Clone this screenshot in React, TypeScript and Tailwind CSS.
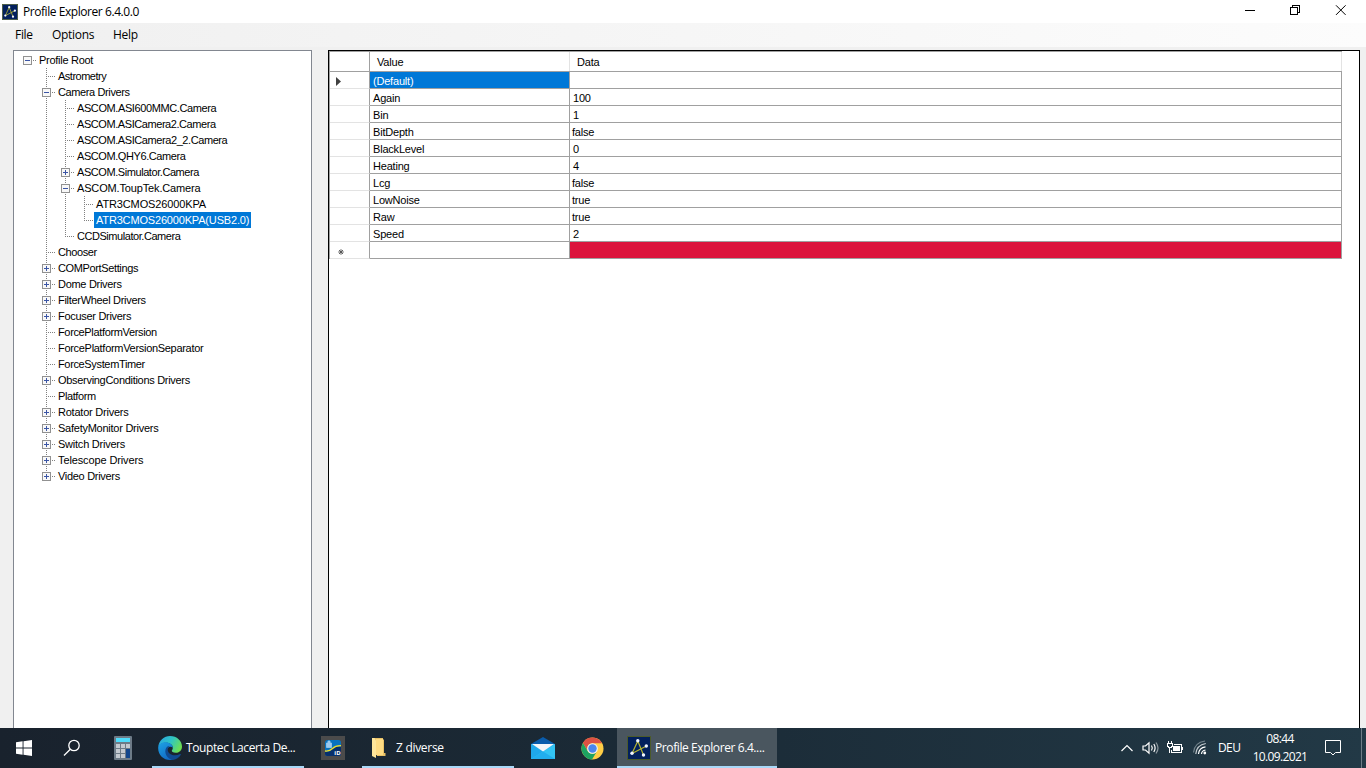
import clsx from "clsx";
import type { ReactNode } from "react";

type TreeRow = {
  label: string;
  // one character per indent column: "|" line passes, " " empty,
  // "T" branch, "L" last branch, "+" / "-" expander, "r" root expander, "e" last expander
  guides: string;
  track?: string;
  selected?: boolean;
};

const TREE: TreeRow[] = [
  { label: "Profile Root", guides: "r", track: "tracking-[-0.28px]" },
  { label: "Astrometry", guides: " T", track: "tracking-[-0.5px]" },
  { label: "Camera Drivers", guides: " -", track: "tracking-[-0.38px]" },
  { label: "ASCOM.ASI600MMC.Camera", guides: " |T", track: "tracking-[-0.4px]" },
  { label: "ASCOM.ASICamera2.Camera", guides: " |T", track: "tracking-[-0.43px]" },
  { label: "ASCOM.ASICamera2_2.Camera", guides: " |T", track: "tracking-[-0.42px]" },
  { label: "ASCOM.QHY6.Camera", guides: " |T", track: "tracking-[-0.42px]" },
  { label: "ASCOM.Simulator.Camera", guides: " |+", track: "tracking-[-0.43px]" },
  { label: "ASCOM.ToupTek.Camera", guides: " |-", track: "tracking-[-0.15px]" },
  { label: "ATR3CMOS26000KPA", guides: " ||T", track: "tracking-[-0.13px]" },
  { label: "ATR3CMOS26000KPA(USB2.0)", guides: " ||L", track: "tracking-[-0.17px]", selected: true },
  { label: "CCDSimulator.Camera", guides: " |L", track: "tracking-[-0.45px]" },
  { label: "Chooser", guides: " T", track: "tracking-[-0.4px]" },
  { label: "COMPortSettings", guides: " +", track: "tracking-[-0.37px]" },
  { label: "Dome Drivers", guides: " +" },
  { label: "FilterWheel Drivers", guides: " +" },
  { label: "Focuser Drivers", guides: " +" },
  { label: "ForcePlatformVersion", guides: " T", track: "tracking-[-0.35px]" },
  { label: "ForcePlatformVersionSeparator", guides: " T" },
  { label: "ForceSystemTimer", guides: " T", track: "tracking-[-0.35px]" },
  { label: "ObservingConditions Drivers", guides: " +" },
  { label: "Platform", guides: " T", track: "tracking-[-0.4px]" },
  { label: "Rotator Drivers", guides: " +", track: "tracking-[-0.23px]" },
  { label: "SafetyMonitor Drivers", guides: " +", track: "tracking-[-0.25px]" },
  { label: "Switch Drivers", guides: " +", track: "tracking-[-0.23px]" },
  { label: "Telescope Drivers", guides: " +", track: "tracking-[-0.12px]" },
  { label: "Video Drivers", guides: " e" },
];

const VALUES = [
  ["(Default)", ""],
  ["Again", "100"],
  ["Bin", "1"],
  ["BitDepth", "false"],
  ["BlackLevel", "0"],
  ["Heating", "4"],
  ["Lcg", "false"],
  ["LowNoise", "true"],
  ["Raw", "true"],
  ["Speed", "2"],
];

function Guide({ kind }: { kind: string }) {
  const box = "r+-e".includes(kind);
  const top = kind !== " " && kind !== "r";
  const bottom = "|T+-".includes(kind);
  return (
    <svg width="19" height="16" className="shrink-0" shapeRendering="crispEdges">
      <g stroke="#808080" strokeDasharray="1 1">
        {top && <path d="M9.5 0V8" />}
        {bottom && <path d="M9.5 8V16" />}
        {(kind === "T" || kind === "L") && <path d="M9 8.5H18" />}
        {box && <path d="M15 8.5H18" />}
      </g>
      {box && (
        <>
          <rect x="5.5" y="4.5" width="8" height="8" fill="#f8f8f8" stroke="#919191" />
          <path d="M7 8.5h5" stroke="#3b55a5" />
          {(kind === "+" || kind === "e") && <path d="M9.5 6v5" stroke="#3b55a5" />}
        </>
      )}
    </svg>
  );
}

function AscomIcon({ className }: { className: string }) {
  return (
    <svg viewBox="0 0 24 24" className={className}>
      <rect x="0.5" y="0.5" width="23" height="23" fill="#02205c" stroke="#4b5a2a" />
      <path d="M5 17.500 10.800 5 16.500 19M5 17.500 19.500 10" fill="none" stroke="#b4b432" strokeWidth="1.200" />
      <g fill="#f0f4ff">
        <circle cx="10.800" cy="4.800" r="1.700" />
        <circle cx="19.300" cy="10" r="1.700" />
        <circle cx="5" cy="17.300" r="1.700" />
        <circle cx="16.500" cy="19" r="1.700" />
      </g>
    </svg>
  );
}

function TitleBar() {
  return (
    <header className="flex h-[23px] shrink-0 items-center bg-white pl-[2px]">
      <AscomIcon className="h-4 w-4" />
      <span className="ml-[5px] flex-1 text-[12px] tracking-[-0.44px]">Profile Explorer 6.4.0.0</span>
      <svg width="126" height="23" fill="none" stroke="#000" className="shrink-0">
        <path d="M5 10.5h10M50.5 7.5h7v7h-7zM52.5 7.5v-2h7v7h-2" shapeRendering="crispEdges" />
        <path d="m96 5.3 9.6 9.6M105.6 5.3 96 14.9" />
      </svg>
    </header>
  );
}

function Tree() {
  return (
    <aside className="w-[299px] shrink-0 border border-b-0 border-[#828790] bg-white pl-1 pt-px">
      {TREE.map((row) => (
        <div key={row.label} className="flex h-4">
          {row.guides.split("").map((kind, i) => (
            <Guide key={i} kind={kind} />
          ))}
          <span
            className={clsx(
              "h-4 whitespace-nowrap text-[11px] leading-4",
              row.track ?? "tracking-[-0.3px]",
              row.selected ? "bg-[#0078d7] px-[2px] text-white" : "pl-[2px]",
            )}
          >
            {row.label}
          </span>
        </div>
      ))}
    </aside>
  );
}

function GridRow({ marker, children }: { marker?: ReactNode; children: ReactNode }) {
  return (
    <div className="flex h-[17px]">
      <div className="flex w-10 items-center border-b border-r border-b-[#e3e3e3] border-r-[#a0a0a0]">{marker}</div>
      {children}
    </div>
  );
}

const CELL = "h-[17px] overflow-hidden border-b border-r border-[#a0a0a0]";

function DataGrid() {
  return (
    <main className="mr-[6px] flex-1 border border-b-0 border-black bg-white text-[11px] tracking-[-0.2px]">
      <div className="w-[1013px] border-l border-t border-[#a0a0a0]">
        <div className="flex h-5 border-b border-[#a0a0a0] leading-5">
          <div className="w-10 border-r border-[#a0a0a0]" />
          <div className="w-[200px] border-r border-[#e3e3e3] pl-[7px]">Value</div>
          <div className="w-[772px] border-r border-[#e3e3e3] pl-[7px]">Data</div>
        </div>
        {VALUES.map(([name, data], i) => (
          <GridRow
            key={name}
            marker={
              i === 0 && (
                <svg width="12" height="11" className="ml-[5px] mt-[2px]">
                  <path d="M1 1v9l5-4.5z" fill="#404040" />
                </svg>
              )
            }
          >
            <div
              className={clsx(
                CELL,
                "w-[200px] pl-[3px]",
                i === 0 ? "bg-[#0078d7] leading-[18px] text-white" : "leading-[19px]",
              )}
            >
              {name}
            </div>
            <div className={clsx(CELL, "w-[772px] leading-[19px]", /\d/.test(data) ? "pl-[3px]" : "pl-[2px]")}>
              {data}
            </div>
          </GridRow>
        ))}
        <GridRow
          marker={
            <svg width="8" height="8" className="ml-[7px] mt-[3px]">
              <path d="M4 1.200v5.600M1.200 4h5.600M2 2l4 4M6 2 2 6" stroke="#505050" strokeWidth="0.900" />
            </svg>
          }
        >
          <div className={clsx(CELL, "w-[200px]")} />
          <div className={clsx(CELL, "w-[772px] bg-[#dc143c]")} />
        </GridRow>
      </div>
    </main>
  );
}

function EdgeIcon() {
  return (
    <svg viewBox="0 0 24 24" width="24" height="24">
      <defs>
        <linearGradient id="edgeTop" x1="0" y1="0.2" x2="1" y2="0.6">
          <stop offset="0" stopColor="#2aa5e0" />
          <stop offset="0.5" stopColor="#2fc5c4" />
          <stop offset="1" stopColor="#6fe04e" />
        </linearGradient>
        <linearGradient id="edgeLeft" x1="0" y1="0" x2="0.6" y2="1">
          <stop offset="0" stopColor="#1da2e4" />
          <stop offset="1" stopColor="#1168c4" />
        </linearGradient>
      </defs>
      <path d="M.3 10.500C1.200 4.500 6 0 12 0c7 0 12 5 12 10.500 0 4-3 6.300-6.200 6.300-3 0-4-1.200-4-2 0-.7 1-1.100 1-3 0-2.600-2.600-5-6.600-5C4 6.800 1 8.800.3 10.500z" fill="url(#edgeTop)" />
      <path d="M.3 10.500C1 8 4 6.300 7.500 6.300c4 0 7.300 2.400 7.300 5.500-2-2-6-1-6 3.200 0 4.300 4 8.200 8.700 7.300-1.500 1-3.300 1.700-5.500 1.700C5 24-.7 18 .3 10.500z" fill="url(#edgeLeft)" />
      <path d="M9.500 10.500c-4 3-2.500 11.500 4.500 13.200 4 .1 7.300-2 8.800-5 .3-.6-.2-.9-.7-.6-5.500 2.700-11.600.4-12.300-3.600-.2-1.600.2-3.200 1.800-4-.6-.3-1.500-.4-2.100 0z" fill="#104a91" />
    </svg>
  );
}

function ChromeIcon() {
  return (
    <svg viewBox="0 0 24 24" width="23" height="23">
      <circle cx="12" cy="12" r="11.500" fill="#ffcd46" />
      <path d="M2 6.300A11.500 11.500 0 0 1 22 6.500H12a5.500 5.500 0 0 0-5 3.200L6.800 14z" fill="#dd5144" />
      <path d="M2 6.300A11.500 11.500 0 0 0 11.500 23.500l5-8.300a5.500 5.500 0 0 1-9.500-.7z" fill="#1da362" />
      <circle cx="12" cy="12" r="5.600" fill="#f1f1f1" />
      <circle cx="12" cy="12" r="4.400" fill="#4a86ee" />
    </svg>
  );
}

function TrayIcons() {
  return (
    <svg width="98" height="20" fill="none" stroke="#fff" strokeWidth="1.200">
      <path d="m1.500 13 5.500-5.500L12.500 13" />
      <path d="M23 8h2.500L29 4.800v10.400L25.500 12H23zM31.500 7.500q1.600 2.500 0 5M33.800 6q2.600 4 0 8" />
      <path d="M36 4.500q4 5.500 0 11" stroke="#8c989f" />
      <g strokeWidth="1" shapeRendering="crispEdges">
        <path d="M54 6.500h7.500v8h-10V12M62.500 9v3" />
        <path d="M53 8h7v5h-7z" fill="#fff" stroke="none" />
        <path d="M48.500 3v2M51.500 3v2M47.500 5.500h5v3h-1v1h-3v-1h-1zM49.500 10v4.500" />
      </g>
      <path d="M81.500 16q.3-3.500 4-4M78.500 16q.5-6.300 7-7.200" />
      <path d="M75.800 16q.7-9 10-10.500" stroke="#c3cace" />
      <path d="M73.500 14.500Q74.500 4.500 85 3" stroke="#72828b" />
      <circle cx="84.800" cy="15" r="1.400" fill="#fff" stroke="none" />
    </svg>
  );
}

function Taskbar() {
  return (
    <footer className="flex h-10 shrink-0 bg-linear-to-r from-[#19222d] via-[#1b2b37] to-[#223946] text-[12px] text-white">
      <div className="flex w-12 items-center justify-center">
        <svg width="16" height="16" fill="#fff">
          <path d="M0 2.300 6.600 1.300V7.500H0zM7.500 1.200 16 0v7.500H7.500zM0 8.400h6.600v6.300L0 13.700zM7.500 8.400H16V16l-8.500-1.200z" />
        </svg>
      </div>
      <div className="flex w-12 items-center justify-center">
        <svg width="18" height="18" fill="none" stroke="#fff" strokeWidth="1.300">
          <circle cx="11" cy="6.500" r="5.200" />
          <path d="M7.300 10.200 1 16.500" />
        </svg>
      </div>
      <div className="flex w-[54px] items-center justify-center">
        <svg width="18" height="24">
          <rect width="18" height="24" rx="1" fill="#6d7b87" />
          <rect x="2" y="2" width="14" height="4" fill="#50dcfb" />
          <path d="M2 8h4v4H2zM7 8h4v4H7zM12 8h4v4h-4zM2 13h4v4H2zM7 13h4v4H7zM2 18h4v4H2zM7 18h4v4H7z" fill="#c4cad0" />
          <path d="M12 13h4v9h-4z" fill="#12468c" />
        </svg>
      </div>
      <div className="ml-[2px] flex w-[152px] items-center border-b-2 border-[#a8d8f8] pl-[6px] pt-[2px]">
        <EdgeIcon />
        <span className="ml-1 whitespace-nowrap tracking-[-0.4px]">Touptec Lacerta De...</span>
      </div>
      <div className="flex w-[58px] items-center justify-center">
        <svg width="24" height="24">
          <rect width="24" height="24" fill="#4b4b4b" />
          <rect x="4" y="4" width="16" height="16" rx="2.500" fill="#0872bf" />
          <path d="M4 15.500c4 1 6-1 8-3s4-2 8-1.500v6.500a2.500 2.500 0 0 1-2.500 2.500h-11A2.500 2.500 0 0 1 4 17.500z" fill="#062f6c" />
          <path d="M4 15c4 .5 5.500-.5 7.500-2.500S16 9.500 20 9.700" fill="none" stroke="#f0dc28" strokeWidth="1.300" />
          <path d="M5.500 7h5v4.500h-5zM7 7V5h2v2" fill="#9cc9ee" stroke="#9cc9ee" strokeWidth="0.800" />
          <text x="13.300" y="18.600" fontSize="6" fontWeight="700" fill="#fff">
            iD
          </text>
        </svg>
      </div>
      <div className="flex w-[152px] items-center border-b-2 border-[#a8d8f8] pl-[9px] pt-[2px]">
        <svg width="16" height="22">
          <path d="M1 1h11v1.500h1V16h1.500v3H6z" fill="#eac267" />
          <path d="M1 1h2.500L5 3.500V21L1 19z" fill="#ffe69b" />
          <path d="M5 2h7v16H5z" fill="#ffdc83" />
        </svg>
        <span className="ml-[9px] tracking-[-0.3px]">Z diverse</span>
      </div>
      <div className="flex w-[58px] items-center justify-center">
        <svg width="24" height="24" className="mt-[-1px]">
          <path d="M0 8 12 1l12 7-12 8z" fill="#0a5cab" />
          <path d="M0 8h24v15H0z" fill="#1fa8ea" />
          <path d="M24 8v15H0z" fill="#33c4f4" />
          <path d="M1 8h22l-11 7.500z" fill="#f4f6f8" />
          <path d="m12 15.500 12 7.500H0z" fill="#22aeee" />
        </svg>
      </div>
      <div className="flex w-[40px] items-center justify-center">
        <ChromeIcon />
      </div>
      <div className="ml-[5px] flex w-[160px] items-center border-b-2 border-[#a8d8f8] bg-[#4a565f] pl-[10px] pt-[2px]">
        <AscomIcon className="h-6 w-6 shrink-0" />
        <span className="ml-1 whitespace-nowrap tracking-[-0.4px]">Profile Explorer 6.4....</span>
      </div>
      <div className="ml-auto flex items-center">
        <TrayIcons />
        <span className="w-[22px] whitespace-nowrap tracking-[-0.6px]">DEU</span>
        <div className="ml-[12px] w-[56px] whitespace-nowrap text-center leading-[18px] tracking-[-0.65px]">
          <div>08:44</div>
          <div>10.09.2021</div>
        </div>
        <svg width="17" height="18" fill="none" stroke="#fff" className="ml-[17px]">
          <path d="M.5 1.500h15v12h-5L8 16l-2.500-2.500h-5z" />
        </svg>
        <div className="ml-[19px] h-10 w-[5px] border-l border-[#6d7d87]" />
      </div>
    </footer>
  );
}

export default function App() {
  return (
    <div className="flex h-screen w-screen flex-col overflow-hidden bg-[#f0f0f0] font-['Open_Sans','Noto_Sans',sans-serif] text-black">
      <TitleBar />
      <nav className="mb-[3px] flex h-6 shrink-0 items-center bg-linear-to-r from-[#f0f0f0] to-[#fcfcfc] pl-[15px] text-[12px] tracking-[-0.3px]">
        <span className="w-[37px]">File</span>
        <span className="w-[61px]">Options</span>
        <span>Help</span>
      </nav>
      <div className="flex min-h-0 flex-1 gap-4 pl-[13px] font-['Liberation_Sans',Arial,sans-serif]">
        <Tree />
        <DataGrid />
      </div>
      <Taskbar />
    </div>
  );
}
